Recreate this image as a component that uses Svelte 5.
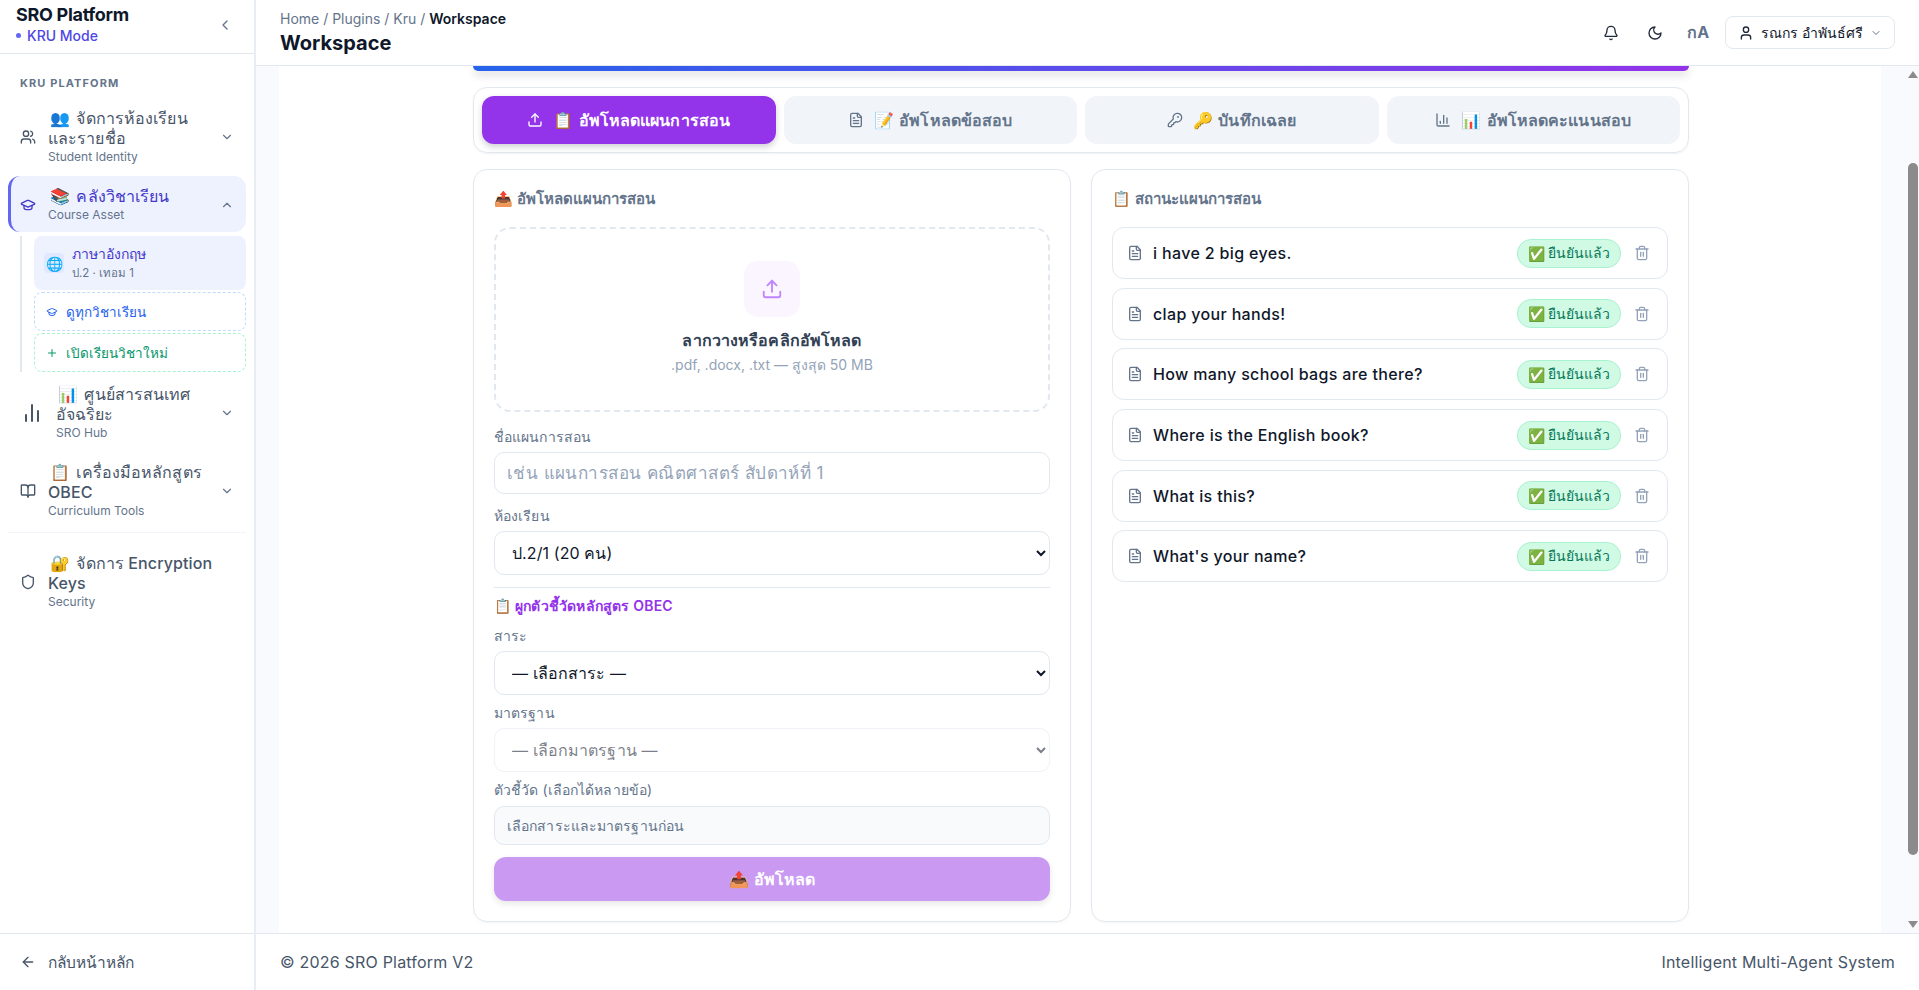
<script lang="ts">
  // lucide-style icon bodies
  const paths: Record<string, string> = {
    users: '<path d="M16 21v-2a4 4 0 0 0-4-4H6a4 4 0 0 0-4 4v2"/><circle cx="9" cy="7" r="4"/><path d="M22 21v-2a4 4 0 0 0-3-3.87"/><path d="M16 3.13a4 4 0 0 1 0 7.75"/>',
    cap: '<path d="M21.42 10.922a1 1 0 0 0-.019-1.838L12.83 5.18a2 2 0 0 0-1.66 0L2.6 9.08a1 1 0 0 0 0 1.832l8.57 3.908a2 2 0 0 0 1.66 0z"/><path d="M6 12.5V16a6 3 0 0 0 12 0v-3.5"/>',
    bars: '<path d="M18 20V10"/><path d="M12 20V4"/><path d="M6 20v-6"/>',
    book: '<path d="M12 7v14"/><path d="M3 18a1 1 0 0 1-1-1V4a1 1 0 0 1 1-1h5a4 4 0 0 1 4 4 4 4 0 0 1 4-4h5a1 1 0 0 1 1 1v13a1 1 0 0 1-1 1h-6a3 3 0 0 0-3 3 3 3 0 0 0-3-3z"/>',
    shield: '<path d="M20 13c0 5-3.5 7.5-7.66 8.95a1 1 0 0 1-.67-.01C7.5 20.5 4 18 4 13V6a1 1 0 0 1 1-1c2 0 4.5-1.2 6.24-2.72a1.17 1.17 0 0 1 1.52 0C14.51 3.81 17 5 19 5a1 1 0 0 1 1 1z"/>',
    upload: '<path d="M21 15v4a2 2 0 0 1-2 2H5a2 2 0 0 1-2-2v-4"/><path d="M17 8l-5-5-5 5"/><path d="M12 3v12"/>',
    file: '<path d="M15 2H6a2 2 0 0 0-2 2v16a2 2 0 0 0 2 2h12a2 2 0 0 0 2-2V7Z"/><path d="M14 2v4a2 2 0 0 0 2 2h4"/><path d="M10 9H8"/><path d="M16 13H8"/><path d="M16 17H8"/>',
    key: '<path d="M2.586 17.414A2 2 0 0 0 2 18.828V21a1 1 0 0 0 1 1h3a1 1 0 0 0 1-1v-1a1 1 0 0 1 1-1h1a1 1 0 0 0 1-1v-1a1 1 0 0 1 1-1h.172a2 2 0 0 0 1.414-.586l.814-.814a6.5 6.5 0 1 0-4-4z"/><circle cx="16.5" cy="7.5" r=".5"/>',
    chart: '<path d="M3 3v16a2 2 0 0 0 2 2h16"/><path d="M18 17V9"/><path d="M13 17V5"/><path d="M8 17v-3"/>',
    bell: '<path d="M10.268 21a2 2 0 0 0 3.464 0"/><path d="M3.262 15.326A1 1 0 0 0 4 17h16a1 1 0 0 0 .74-1.673C19.41 13.956 18 12.499 18 8A6 6 0 0 0 6 8c0 4.499-1.411 5.956-2.738 7.326"/>',
    moon: '<path d="M12 3a6 6 0 0 0 9 9 9 9 0 1 1-9-9Z"/>',
    user: '<path d="M19 21v-2a4 4 0 0 0-4-4H9a4 4 0 0 0-4 4v2"/><circle cx="12" cy="7" r="4"/>',
    trash: '<path d="M3 6h18"/><path d="M19 6v14c0 1-1 2-2 2H7c-1 0-2-1-2-2V6"/><path d="M8 6V4c0-1 1-2 2-2h4c1 0 2 1 2 2v2"/><path d="M10 11v6"/><path d="M14 11v6"/>',
    plus: '<path d="M5 12h14"/><path d="M12 5v14"/>',
    left: '<path d="m15 18-6-6 6-6"/>',
    down: '<path d="m6 9 6 6 6-6"/>',
    up: '<path d="m18 15-6-6-6 6"/>',
    back: '<path d="m12 19-7-7 7-7"/><path d="M19 12H5"/>'
  };

  const tabs = [
    { icon: "upload", emoji: "📋", label: "อัพโหลดแผนการสอน", active: true },
    { icon: "file", emoji: "📝", label: "อัพโหลดข้อสอบ" },
    { icon: "key", emoji: "🔑", label: "บันทึกเฉลย" },
    { icon: "chart", emoji: "📊", label: "อัพโหลดคะแนนสอบ" }
  ];

  const plans = [
    "i have 2 big eyes.",
    "clap your hands!",
    "How many school bags are there?",
    "Where is the English book?",
    "What is this?",
    "What's your name?"
  ];
</script>

{#snippet icon(name: string, cls: string)}
  <svg class={cls} viewBox="0 0 24 24" fill="none" stroke="currentColor" stroke-width="2" stroke-linecap="round" stroke-linejoin="round">{@html paths[name]}</svg>
{/snippet}

<div class="shell">
  <aside class="sidebar">
    <div class="brand">
      <div>
        <div class="brand-name">SRO Platform</div>
        <div class="brand-mode"><span class="dot"></span>KRU Mode</div>
      </div>
      {@render icon("left", "i16 muted")}
    </div>

    <nav class="nav">
      <div class="nav-title">KRU PLATFORM</div>

      <div class="nav-item">
        {@render icon("users", "i16")}
        <div class="nav-text">
          <div class="nav-label"><span class="em">👥</span> จัดการห้องเรียน<br />และรายชื่อ</div>
          <div class="nav-sub">Student Identity</div>
        </div>
        {@render icon("down", "i14 muted")}
      </div>

      <div class="nav-item active">
        {@render icon("cap", "i16")}
        <div class="nav-text">
          <div class="nav-label"><span class="em">📚</span> คลังวิชาเรียน</div>
          <div class="nav-sub">Course Asset</div>
        </div>
        {@render icon("up", "i14 muted")}
      </div>

      <div class="tree">
        <div class="course">
          <span class="course-icon">🌐</span>
          <div>
            <div class="course-name">ภาษาอังกฤษ</div>
            <div class="course-meta">ป.2 · เทอม 1</div>
          </div>
        </div>
        <div class="tree-link blue">{@render icon("cap", "i12")}ดูทุกวิชาเรียน</div>
        <div class="tree-link green">{@render icon("plus", "i12")}เปิดเรียนวิชาใหม่</div>
      </div>

      <div class="nav-item">
        {@render icon("bars", "i24")}
        <div class="nav-text">
          <div class="nav-label"><span class="em">📊</span> ศูนย์สารสนเทศ<br />อัจฉริยะ</div>
          <div class="nav-sub">SRO Hub</div>
        </div>
        {@render icon("down", "i14 muted")}
      </div>

      <div class="nav-item">
        {@render icon("book", "i16")}
        <div class="nav-text">
          <div class="nav-label"><span class="em">📋</span> เครื่องมือหลักสูตร<br />OBEC</div>
          <div class="nav-sub">Curriculum Tools</div>
        </div>
        {@render icon("down", "i14 muted")}
      </div>

      <div class="nav-rule"></div>

      <div class="nav-item">
        {@render icon("shield", "i16")}
        <div class="nav-text">
          <div class="nav-label"><span class="em">🔐</span> จัดการ Encryption<br />Keys</div>
          <div class="nav-sub">Security</div>
        </div>
      </div>
    </nav>

    <div class="side-foot">
      {@render icon("back", "i16")}
      <span>กลับหน้าหลัก</span>
    </div>
  </aside>

  <div class="main">
    <header class="topbar">
      <div>
        <div class="crumbs">Home / Plugins / Kru / <b>Workspace</b></div>
        <h1>Workspace</h1>
      </div>
      <div class="top-actions">
        {@render icon("bell", "i16 dark")}
        {@render icon("moon", "i16 dark")}
        <span class="lang">กA</span>
        <div class="user">
          {@render icon("user", "i16 dark")}
          <span>รณกร อำพันธ์ศรี</span>
          {@render icon("down", "i12 muted")}
        </div>
      </div>
    </header>

    <div class="viewport">
      <div class="scroller">
        <div class="page">
          <div class="wrap">
            <div class="hero"></div>

            <div class="tabs">
              {#each tabs as t}
                <button class="tab" class:on={t.active}>
                  {@render icon(t.icon, "i16")}
                  <span class="em">{t.emoji}</span>
                  {t.label}
                </button>
              {/each}
            </div>

            <div class="cols">
              <section class="card">
                <h3 class="card-title"><span class="em">📤</span> อัพโหลดแผนการสอน</h3>

                <div class="drop">
                  <div class="drop-icon">{@render icon("upload", "i22")}</div>
                  <div class="drop-title">ลากวางหรือคลิกอัพโหลด</div>
                  <div class="drop-sub">.pdf, .docx, .txt — สูงสุด 50 MB</div>
                </div>

                <label class="field-label m15" for="plan-name">ชื่อแผนการสอน</label>
                <input id="plan-name" class="input" placeholder="เช่น แผนการสอน คณิตศาสตร์ สัปดาห์ที่ 1" />

                <label class="field-label m12" for="room">ห้องเรียน</label>
                <select id="room" class="input sel">
                  <option>ป.2/1 (20 คน)</option>
                </select>

                <div class="rule"></div>
                <div class="obec"><span class="em">📋</span> ผูกตัวชี้วัดหลักสูตร OBEC</div>

                <label class="field-label m10" for="strand">สาระ</label>
                <select id="strand" class="input sel">
                  <option>— เลือกสาระ —</option>
                </select>

                <label class="field-label m8" for="std">มาตรฐาน</label>
                <select id="std" class="input sel" disabled>
                  <option>— เลือกมาตรฐาน —</option>
                </select>

                <div class="field-label m8">ตัวชี้วัด (เลือกได้หลายข้อ)</div>
                <div class="hint-box">เลือกสาระและมาตรฐานก่อน</div>

                <button class="submit"><span class="em">📤</span> อัพโหลด</button>
              </section>

              <section class="card right">
                <h3 class="card-title"><span class="em">📋</span> สถานะแผนการสอน</h3>
                <div class="plans">
                  {#each plans as p}
                    <div class="plan">
                      {@render icon("file", "i16 slate")}
                      <span class="plan-name">{p}</span>
                      <span class="badge"><span class="em">✅</span> ยืนยันแล้ว</span>
                      {@render icon("trash", "i16 gray")}
                    </div>
                  {/each}
                </div>
              </section>
            </div>
          </div>
        </div>
      </div>

      <div class="sbar">
        <svg class="arrow" viewBox="0 0 10 7"><path d="M5 0 10 7H0Z" fill="#8b8b8b" /></svg>
        <div class="track"><div class="thumb"></div></div>
        <svg class="arrow dn" viewBox="0 0 10 7"><path d="M0 0H10L5 7Z" fill="#8b8b8b" /></svg>
      </div>
    </div>

    <footer class="foot">
      <span>© 2026 SRO Platform V2</span>
      <span>Intelligent Multi-Agent System</span>
    </footer>
  </div>
</div>

<style>
  :global(body) {
    margin: 0;
    font-family: Inter, "Noto Sans", sans-serif;
    color: #0f172a;
  }
  .shell {
    display: flex;
    height: 990px;
    overflow: hidden;
  }
  .i12 { width: 12px; height: 12px; flex: none; }
  .i14 { width: 14px; height: 14px; flex: none; }
  .i16 { width: 16px; height: 16px; flex: none; }
  .i22 { width: 22px; height: 22px; flex: none; }
  .i24 { width: 24px; height: 24px; flex: none; }
  .muted { color: #64748b; }
  .dark { color: #1e293b; }
  .slate { color: #64748b; }
  .gray { color: #94a3b8; }

  .sidebar {
    width: 256px;
    flex: none;
    display: flex;
    flex-direction: column;
    border-right: 2px solid #e8edf4;
    box-sizing: border-box;
    background: #fff;
  }
  .brand {
    height: 54px;
    flex: none;
    box-sizing: border-box;
    display: flex;
    align-items: center;
    justify-content: space-between;
    padding: 0 21px 4px 16px;
    border-bottom: 1px solid #e2e8f0;
  }
  .brand-name {
    font-size: 18px;
    font-weight: 700;
    line-height: 22px;
    letter-spacing: -0.3px;
  }
  .brand-mode {
    display: flex;
    align-items: center;
    gap: 6px;
    font-size: 14px;
    font-weight: 500;
    line-height: 20px;
    color: #4f46e5;
  }
  .dot {
    width: 5px;
    height: 5px;
    border-radius: 50%;
    background: #6366f1;
  }
  .nav {
    flex: 1;
    padding: 22px 8px 0;
  }
  .nav-title {
    font-size: 11px;
    font-weight: 700;
    letter-spacing: 1.1px;
    line-height: 14px;
    color: #64748b;
    padding: 0 12px;
    margin-bottom: 8px;
  }
  .nav-item {
    display: flex;
    align-items: center;
    gap: 12px;
    padding: 10px 12px 8px;
    margin-top: 2px;
    border-radius: 12px;
    color: #475569;
  }
  .nav-text {
    flex: 1;
    min-width: 0;
  }
  .nav-label {
    font-size: 16px;
    font-weight: 500;
    line-height: 20px;
    letter-spacing: 0.1px;
  }
  .nav-label .em {
    margin: 0 2px 0 2px;
  }
  .nav-sub {
    font-size: 12px;
    line-height: 18px;
    color: #64748b;
  }
  .nav-item.active {
    background: #eef2ff;
    border-left: 3px solid #6366f1;
    padding-left: 9px;
    color: #4338ca;
  }
  .tree {
    margin: 4px 0 0 12px;
    padding-left: 12px;
    border-left: 2px solid #e2e8f0;
    display: flex;
    flex-direction: column;
    gap: 2px;
  }
  .course {
    display: flex;
    align-items: center;
    gap: 8px;
    height: 54px;
    padding: 0 10px;
    border-radius: 8px;
    background: #eef2ff;
  }
  .course-icon {
    width: 20px;
    height: 20px;
    border-radius: 4px;
    background: #e0e7ff;
    font-size: 14px;
    display: flex;
    align-items: center;
    justify-content: center;
  }
  .course-name {
    font-size: 14px;
    font-weight: 500;
    color: #4338ca;
    line-height: 20px;
  }
  .course-meta {
    font-size: 11.5px;
    color: #64748b;
    line-height: 18px;
  }
  .tree-link {
    display: flex;
    align-items: center;
    gap: 8px;
    height: 39px;
    box-sizing: border-box;
    padding: 0 11px;
    border-radius: 8px;
    font-size: 13.5px;
    font-weight: 500;
  }
  .tree-link.blue {
    border: 1px dashed #bfdbfe;
    color: #2563eb;
  }
  .tree-link.green {
    border: 1px dashed #a7f3d0;
    color: #059669;
  }
  .nav-rule {
    height: 1px;
    background: #f1f5f9;
    margin: 4px 0 10px;
  }
  .side-foot {
    height: 57px;
    flex: none;
    box-sizing: border-box;
    display: flex;
    align-items: center;
    gap: 12px;
    padding: 0 20px;
    border-top: 1px solid #e2e8f0;
    color: #475569;
    font-size: 15.5px;
  }

  .main {
    flex: 1;
    min-width: 0;
    display: flex;
    flex-direction: column;
  }
  .topbar {
    height: 66px;
    flex: none;
    box-sizing: border-box;
    display: flex;
    align-items: center;
    justify-content: space-between;
    padding: 0 24px;
    border-bottom: 1px solid #e2e8f0;
    background: #fff;
  }
  .crumbs {
    font-size: 14px;
    line-height: 20px;
    color: #64748b;
  }
  .crumbs b {
    font-weight: 600;
    color: #0f172a;
  }
  h1 {
    margin: 0;
    font-size: 20px;
    line-height: 28px;
    font-weight: 700;
  }
  .top-actions {
    display: flex;
    align-items: center;
    gap: 28px;
  }
  .lang {
    font-size: 16px;
    font-weight: 700;
    color: #64748b;
    margin: 0 -4px;
  }
  .user {
    display: flex;
    align-items: center;
    gap: 7px;
    height: 31px;
    padding: 0 12px;
    border: 1px solid #e2e8f0;
    border-radius: 8px;
    font-size: 14px;
    font-weight: 500;
    margin-left: -8px;
  }

  .viewport {
    flex: 1;
    min-height: 0;
    display: flex;
    background: #f9fafd;
  }
  .scroller {
    flex: 1;
    min-width: 0;
    overflow: hidden;
  }
  .sbar {
    width: 15px;
    flex: none;
    display: flex;
    flex-direction: column;
    align-items: center;
    padding-left: 2px;
    box-sizing: border-box;
  }
  .arrow {
    display: block;
    width: 10px;
    height: 7px;
    flex: none;
    margin-top: 5px;
  }
  .arrow.dn {
    margin: 0 0 5px;
  }
  .track {
    flex: 1;
    width: 100%;
    display: flex;
    justify-content: center;
    padding-top: 85px;
  }
  .thumb {
    width: 10px;
    height: 692px;
    border-radius: 5px;
    background: #8b8b8b;
  }

  .page {
    max-width: 1600px;
    margin: 0 auto;
    padding-left: 2px;
    background: #fff;
    height: 100%;
  }
  .wrap {
    width: 1216px;
    margin: 0 auto;
  }
  .hero {
    height: 5px;
    border-radius: 0 0 12px 12px;
    background: linear-gradient(90deg, #2563eb, #9333ea);
    box-shadow: 0 4px 8px rgba(15, 23, 42, 0.18);
  }
  .tabs {
    margin-top: 16px;
    display: grid;
    grid-template-columns: repeat(4, 1fr);
    gap: 8px;
    padding: 8px;
    border: 1px solid #e2e8f0;
    border-radius: 14px;
    box-shadow: 0 1px 2px rgba(15, 23, 42, 0.06);
  }
  .tab {
    height: 48px;
    display: flex;
    align-items: center;
    justify-content: center;
    gap: 10px;
    border: 0;
    border-radius: 12px;
    background: #f1f5f9;
    color: #64748b;
    font: inherit;
    font-size: 16px;
    font-weight: 600;
    letter-spacing: 0.1px;
  }
  .tab .em {
    margin-right: -5px;
  }
  .tab.on {
    background: #9333ea;
    color: #fff;
    box-shadow: 0 3px 6px rgba(15, 23, 42, 0.2);
  }
  .cols {
    display: grid;
    grid-template-columns: 1fr 1fr;
    gap: 20px;
    margin-top: 16px;
  }
  .card {
    height: 753px;
    box-sizing: border-box;
    border: 1px solid #e2e8f0;
    border-radius: 14px;
    padding: 19px 20px;
    box-shadow: 0 1px 2px rgba(15, 23, 42, 0.04);
  }
  .card-title {
    margin: 0 0 18px;
    font-size: 15px;
    line-height: 20px;
    font-weight: 600;
    color: #64748b;
  }
  .card.right .card-title {
    margin-bottom: 17px;
  }
  .drop {
    height: 185px;
    box-sizing: border-box;
    border: 2px dashed #e2e8f0;
    border-radius: 16px;
    display: flex;
    flex-direction: column;
    align-items: center;
    padding-top: 32px;
  }
  .drop-icon {
    width: 56px;
    height: 56px;
    border-radius: 14px;
    background: #faf5ff;
    color: #c084fc;
    display: flex;
    align-items: center;
    justify-content: center;
  }
  .drop-title {
    margin-top: 12px;
    font-size: 16px;
    line-height: 22px;
    font-weight: 600;
    letter-spacing: 0.12px;
    color: #334155;
  }
  .drop-sub {
    margin-top: 4px;
    font-size: 14px;
    line-height: 20px;
    color: #94a3b8;
  }
  .field-label {
    display: block;
    font-size: 14px;
    line-height: 20px;
    letter-spacing: 0.1px;
    color: #64748b;
  }
  .m15 { margin-top: 15px; }
  .m12 { margin-top: 12px; }
  .m10 { margin-top: 10px; }
  .m8 { margin-top: 8px; }
  .input {
    display: block;
    width: 100%;
    box-sizing: border-box;
    margin-top: 5px;
    height: 42px;
    padding: 0 12px;
    border: 1px solid #e2e8f0;
    border-radius: 10px;
    background: #fff;
    font: inherit;
    font-size: 17px;
    letter-spacing: 0.45px;
    color: #0f172a;
  }
  .input::placeholder {
    color: #94a3b8;
  }
  .sel {
    height: 44px;
    padding: 0 13px;
    font-size: 16px;
    letter-spacing: 0.1px;
  }
  .sel:disabled {
    opacity: 0.55;
  }
  .rule {
    height: 1px;
    background: #e2e8f0;
    margin-top: 12px;
  }
  .obec {
    margin-top: 8px;
    font-size: 14px;
    line-height: 20px;
    font-weight: 600;
    letter-spacing: 0.2px;
    color: #9333ea;
  }
  .hint-box {
    margin-top: 6px;
    height: 39px;
    box-sizing: border-box;
    padding: 0 12px;
    display: flex;
    align-items: center;
    border: 1px solid #e2e8f0;
    border-radius: 10px;
    background: #f8fafc;
    font-size: 14px;
    letter-spacing: 0.1px;
    color: #64748b;
  }
  .submit {
    display: block;
    width: 100%;
    margin-top: 12px;
    height: 44px;
    border: 0;
    border-radius: 12px;
    background: #ca9af3;
    color: #fff;
    font: inherit;
    font-size: 16px;
    font-weight: 600;
    box-shadow: 0 3px 6px rgba(15, 23, 42, 0.1);
  }
  .plans {
    display: flex;
    flex-direction: column;
    gap: 8.7px;
    padding-top: 1px;
  }
  .plan {
    height: 52px;
    box-sizing: border-box;
    display: flex;
    align-items: center;
    gap: 10px;
    padding: 0 17px 0 14px;
    border: 1px solid #e2e8f0;
    border-radius: 12px;
  }
  .plan-name {
    flex: 1;
    font-size: 16px;
    font-weight: 500;
    letter-spacing: 0.35px;
  }
  .badge {
    height: 27px;
    display: flex;
    align-items: center;
    gap: 3px;
    padding: 0 10px;
    border-radius: 14px;
    border: 1px solid #a7f3d0;
    background: #d1fae5;
    color: #047857;
    font-size: 14px;
    font-weight: 500;
    margin-right: 3px;
  }
  .foot {
    height: 57px;
    flex: none;
    box-sizing: border-box;
    display: flex;
    align-items: center;
    justify-content: space-between;
    padding: 0 24px;
    border-top: 1px solid #e2e8f0;
    color: #475569;
    font-size: 16px;
    letter-spacing: 0.2px;
    background: #fff;
  }
</style>
